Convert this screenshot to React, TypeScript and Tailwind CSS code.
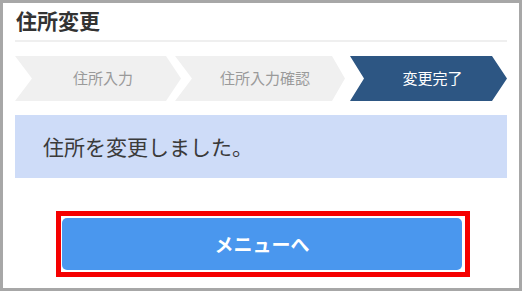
import React from "react";

const steps = [
  {
    label: "住所入力",
    active: false,
    className:
      "w-[166px] [clip-path:polygon(0_0,151px_0,166px_50%,151px_100%,0_100%,17px_50%)]",
  },
  {
    label: "住所入力確認",
    active: false,
    className:
      "w-[170px] -ml-[6px] [clip-path:polygon(0_0,157px_0,170px_50%,157px_100%,0_100%,17px_50%)]",
  },
  {
    label: "変更完了",
    active: true,
    className:
      "w-[157px] ml-[5px] [clip-path:polygon(0_0,142px_0,157px_50%,142px_100%,0_100%,14px_50%)]",
  },
];

export default function App() {
  return (
    <div className="w-[522px] h-[291px] bg-white border-[3px] border-[#a7a7a7] px-3 font-['Noto_Sans_CJK_JP',sans-serif] overflow-hidden">
      {/* Title */}
      <h1 className="pt-[3px] pb-[6px] text-[21px] leading-[28px] font-bold text-[#333] border-b-2 border-[#efefef] pl-[1px]">
        住所変更
      </h1>

      {/* Steps */}
      <div className="flex mt-[14px] h-[45px]">
        {steps.map((step) => (
          <div
            key={step.label}
            className={`${step.className} h-full flex items-center justify-center text-[15px] ${
              step.active ? "bg-[#2d5683] text-white pl-[8px]" : "bg-[#f0f0f0] text-[#9a9a9a] pl-[10px]"
            }`}
          >
            {step.label}
          </div>
        ))}
      </div>

      {/* Message */}
      <div className="mt-[14px] h-[63px] bg-[#cedcf8] flex items-center pl-[28px] text-[21px] text-[#3a3a3a]">
        住所を変更しました。
      </div>

      {/* Button */}
      <div className="mt-[33px] ml-[41px] w-[414px] h-[66px] border-[5px] border-[#f50000] pl-[1px] pr-[3px] py-[2px]">
        <button className="w-full h-full rounded-[5px] bg-[#4a97ee] text-white text-[19px] font-bold">
          メニューへ
        </button>
      </div>
    </div>
  );
}
